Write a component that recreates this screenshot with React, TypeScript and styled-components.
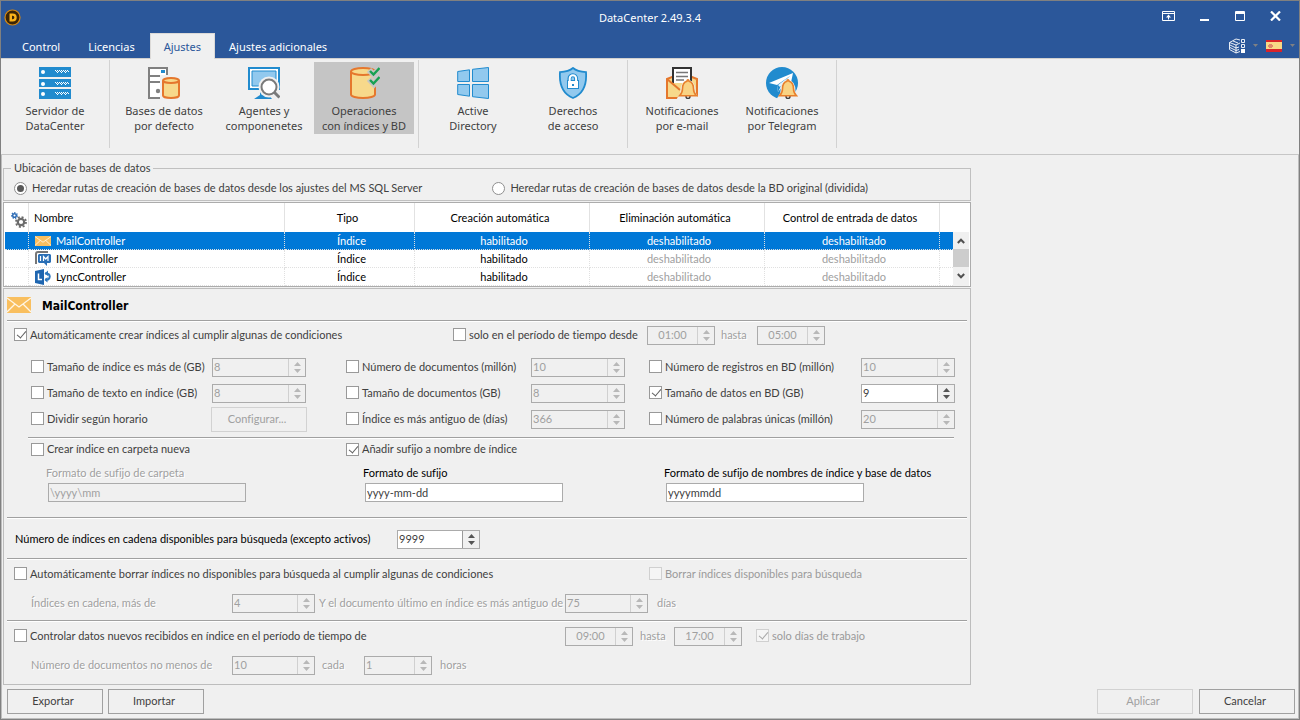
import React, { useState } from 'react';
import styled, { createGlobalStyle, css } from 'styled-components';

const UI = '"Noto Sans", "Open Sans", sans-serif';
const FORM = 'Lato, "Noto Sans", sans-serif';

const Global = createGlobalStyle`
  * { box-sizing: border-box; }
  body { margin: 0; background: #f0f0f0; }
  button, input { font: inherit; margin: 0; }
`;

/* ---------- window frame ---------- */

const Window = styled.div`
  min-height: 100vh;
  display: flex;
  flex-direction: column;
  border: 1px solid #808080;
  background: #f0f0f0;
  color: #404040;
  font: 11px/14px ${FORM};
  font-variant-ligatures: none;
`;

const Header = styled.header`
  background: #2b579a;
  color: #fff;
  font: 11px/15px ${UI};
  border-bottom: 1px solid #d2d0ce;
`;

const TitleBar = styled.div`
  display: grid;
  grid-template-columns: 1fr auto 1fr;
  align-items: center;
  height: 32px;
  padding: 0 3px;
`;

const AppTitle = styled.h1`
  margin: 0;
  font: inherit;
`;

const WindowControls = styled.div`
  display: flex;
  justify-content: flex-end;
  gap: 24px;
  padding: 0 15px 2px 0;
`;

const IconButton = styled.button`
  display: flex;
  align-items: center;
  border: 0;
  padding: 0;
  background: none;
  color: inherit;
`;

const TabBar = styled.nav`
  display: flex;
  justify-content: space-between;
  align-items: center;
  height: 25px;
  padding: 0 4px 0 7px;
`;

const Tabs = styled.div`
  display: flex;
  align-self: stretch;
`;

const Tab = styled.button<{ $active?: boolean }>`
  border: 1px solid transparent;
  border-bottom: 0;
  padding: 1px 13px;
  background: none;
  color: #fff;
  ${p => p.$active && css`
    background: #f0f0f0;
    border-color: #dcdad8;
    color: #2b579a;
    margin: 0 0 -1px 1px;
  `}
`;

const QuickTools = styled.div`
  display: flex;
  align-items: center;
  gap: 8px;
`;

/* ---------- ribbon ---------- */

const Ribbon = styled.div`
  display: flex;
  padding: 1px 0 6px;
  border-bottom: 1px solid #c6c6c6;
  font: 11px/15px ${UI};
`;

const RibbonGroup = styled.div`
  display: flex;
  align-items: flex-start;
  height: 88px;
  padding: 2px 4px 0;
  border-right: 1px solid #d2d2d2;
`;

const RibbonButton = styled.button<{ $selected?: boolean }>`
  display: flex;
  flex-direction: column;
  align-items: center;
  gap: 4px;
  width: 100px;
  height: 72px;
  padding: 5px 0 0;
  border: 0;
  background: ${p => (p.$selected ? '#c5c5c5' : 'none')};
  color: #404040;
  white-space: pre-line;
`;

/* ---------- page ---------- */

const Page = styled.main`
  flex: 1;
  display: flex;
  flex-direction: column;
  padding: 5px 1px 0;
  border: solid #bdbdbd;
  border-width: 0 1px 1px;
`;

const Column = styled.div`
  width: 100%;
  max-width: 968px;
  flex: 1;
  display: flex;
  flex-direction: column;
  gap: 1px;
`;

const LocationBox = styled.fieldset`
  display: flex;
  gap: 67px;
  margin: 0;
  padding: 0 7px;
  border: 1px solid #c0c0c0;
`;

const Legend = styled.legend`
  height: 16px;
  line-height: 16px;
  padding: 0 3px;
`;

const RadioLabel = styled.label`
  display: flex;
  align-items: center;
  gap: 5px;
  height: 24px;
  padding-left: 3px;
`;

const Radio = styled.input.attrs({ type: 'radio' })`
  appearance: none;
  display: grid;
  place-items: center;
  width: 13px;
  height: 13px;
  border: 1px solid #8f8f8f;
  border-radius: 50%;
  background: #fff;
  &:checked::after {
    content: '';
    width: 7px;
    height: 7px;
    border-radius: 50%;
    background: #585858;
  }
`;

/* ---------- controller list ---------- */

const GridBox = styled.div`
  display: flex;
  padding: 0 1px;
  border: 1px solid #acacac;
  background: #fff;
  color: #000;
`;

const DataTable = styled.table`
  flex: 1;
  min-width: 0;
  table-layout: fixed;
  border-collapse: separate;
  border-spacing: 0;
`;

const HeadCell = styled.th<{ $left?: boolean }>`
  height: 29px;
  padding: ${p => (p.$left ? '1px 5px 0' : '1px 4px 0 0')};
  border-right: 1px solid #e2e2e2;
  font-weight: 400;
  text-align: ${p => (p.$left ? 'left' : 'center')};
  &:first-child { padding: 5px 0 0 6px; }
  &:last-child { border-right: 0; }
  > svg { display: block; }
`;

const BodyRow = styled.tr<{ $selected?: boolean }>`
  ${p => p.$selected && css`
    background: #0078d7;
    color: #fff;
  `}
`;

const Cell = styled.td<{ $name?: boolean; $off?: boolean }>`
  height: 18px;
  padding: ${p => (p.$name ? '0 6px' : '0 0 0 4px')};
  border-right: 1px dotted #e0e0e0;
  border-bottom: 1px dotted #e0e0e0;
  text-align: ${p => (p.$name ? 'left' : 'center')};
  ${p => p.$off && css`
    tr:not([aria-selected='true']) > & { color: #a0a0a0; }
  `}
  &:last-child { border-right: 0; }
`;

const NameContent = styled.span`
  display: flex;
  align-items: center;
  gap: 5px;
`;

const ScrollBar = styled.div`
  display: flex;
  flex-direction: column;
  width: 16px;
  margin-top: 29px;
  background: #f0f0f0;
`;

const ScrollArrow = styled.button`
  height: 17px;
  border: 0;
  padding: 0;
  display: grid;
  place-items: center;
  background: none;
`;

const ScrollThumb = styled.div`
  height: 18px;
  background: #cdcdcd;
`;

/* ---------- settings panel ---------- */

const Panel = styled.section`
  padding-bottom: 4px;
  border: 1px solid #bdbdbd;
`;

const PanelHeader = styled.div`
  display: flex;
  align-items: center;
  gap: 11px;
  height: 31px;
  padding-left: 3px;
`;

const PanelTitle = styled.h2`
  margin: 0;
  padding-top: 2px;
  color: #000;
  font: bold 12px/16px "DejaVu Sans Condensed", "DejaVu Sans", sans-serif;
`;

const Divider = styled.hr<{ $inset?: boolean }>`
  height: 2px;
  margin: ${p => (p.$inset ? '5px 16px 0 24px' : '0 3px')};
  border: 0;
  border-top: 1px solid #a0a0a0;
  border-bottom: 1px solid #fff;
`;

const FieldRow = styled.div<{ $cols: string; $height: number; $indent?: boolean }>`
  display: grid;
  grid-template-columns: ${p => p.$cols};
  align-items: center;
  height: ${p => p.$height}px;
  padding-left: ${p => (p.$indent ? 27 : 10)}px;
  white-space: nowrap;
`;

const CountRow = styled(FieldRow)`
  padding-top: 2px;
  padding-left: 11px;
  color: #000;
`;

const PurgeLimits = styled(FieldRow)`
  padding-bottom: 2px;
`;

const ConditionGrid = styled.div`
  display: grid;
  grid-template-columns: 181px 134px 185px 118px 212px 94px;
  grid-auto-rows: 25px;
  row-gap: 1px;
  align-items: center;
  margin-top: 6px;
  padding-left: 27px;
  white-space: nowrap;
`;

const SuffixRow = styled.div`
  display: grid;
  grid-template-columns: 317px 301px 280px;
  padding: 5px 0 15px 42px;
`;

const SuffixField = styled.label<{ $off?: boolean }>`
  display: flex;
  flex-direction: column;
  gap: 3px;
  color: ${p => (p.$off ? '#a0a0a0' : '#000')};
  text-shadow: ${p => (p.$off ? '1px 1px #fff' : 'none')};
`;

const TextBox = styled.input`
  width: 198px;
  height: 19px;
  margin-left: 2px;
  padding: 0 1px;
  border: 1px solid #ababab;
  border-radius: 0;
  background: #fff;
  color: #404040;
  &:disabled { background: #f0f0f0; color: #a0a0a0; }
`;

const CheckLabel = styled.label<{ $off?: boolean }>`
  display: flex;
  align-items: center;
  gap: 3px;
  padding-bottom: 2px;
  color: ${p => (p.$off ? '#9a9a9a' : '#404040')};
`;

const CheckBox = styled.input.attrs({ type: 'checkbox' })`
  appearance: none;
  position: relative;
  width: 13px;
  height: 13px;
  border: 1px solid #999;
  background: #fff;
  &:checked::after {
    content: '';
    position: absolute;
    left: 4px;
    top: 0;
    width: 4px;
    height: 8px;
    border: solid #606060;
    border-width: 0 1px 1px 0;
    transform: rotate(40deg);
  }
  &:disabled { border-color: #d0d0d0; background: #f5f5f5; }
  &:disabled::after { border-color: #a8a8a8; }
`;

const Plain = styled.label`
  padding-bottom: 2px;
`;

const Hint = styled(Plain)`
  color: #a0a0a0;
  text-shadow: 1px 1px #fff;
`;

const SpinFrame = styled.span<{ $width: number; $off?: boolean }>`
  display: flex;
  width: ${p => p.$width}px;
  height: 19px;
  border: 1px solid #ababab;
  color: ${p => (p.$off ? '#b8b8b8' : '#555')};
  background: #f0f0f0;
`;

const SpinInput = styled.input<{ $center?: boolean }>`
  flex: 1;
  min-width: 0;
  padding: 0 1px 1px;
  border: 0;
  border-right: 1px solid #999;
  border-radius: 0;
  background: #fff;
  color: #404040;
  text-align: ${p => (p.$center ? 'center' : 'left')};
  &:disabled { background: #f0f0f0; color: #a0a0a0; border-right-color: #d0d0d0; }
`;

const SpinButtons = styled.span`
  display: flex;
  flex-direction: column;
  justify-content: space-between;
  width: 16px;
  padding: 3px 0;
`;

const SpinButton = styled.button`
  display: flex;
  justify-content: center;
  height: 4px;
  border: 0;
  padding: 0;
  background: none;
  color: inherit;
`;

const PushButton = styled.button`
  width: 96px;
  height: 25px;
  border: 1px solid #a0a0a0;
  padding: 0 4px 2px 0;
  background: #f0f0f0;
  color: #404040;
  &:disabled { border-color: #d2d2d2; color: #a0a0a0; }
`;

const ConfigButton = styled(PushButton)`
  margin-left: -1px;
`;

const Footer = styled.footer`
  display: flex;
  justify-content: space-between;
  padding: 4px 2px 4px 4px;
`;

const ButtonGroup = styled.div<{ $gap: number }>`
  display: flex;
  gap: ${p => p.$gap}px;
`;

/* ---------- icons ---------- */

const Svg = ({ s = 32, children }: { s?: number; children: React.ReactNode }) => (
  <svg width={s} height={s} viewBox={`0 0 ${s} ${s}`} aria-hidden="true">{children}</svg>
);

const LogoIcon = () => (
  <svg width="17" height="17" viewBox="0 0 17 17" aria-hidden="true">
    <circle cx="8.5" cy="8.5" r="7.5" fill="#3b2506" stroke="#d98a0f" strokeWidth="1.2" />
    <path d="M5.5 4.5h3.2a4 4 0 0 1 0 8H5.5zM8 6.700v3.600h.6a1.800 1.800 0 0 0 0-3.600z" fill="#fbb41a" fillRule="evenodd" />
  </svg>
);

const ServersIcon = () => (
  <Svg>
    {[[0, 10], [12, 8], [22, 10]].map(([y, h]) => (
      <g key={y} shapeRendering="crispEdges">
        <rect y={y} width="32" height={h} fill="#218bce" />
        <circle cx="4" cy={y + 5} r="2" fill="#fff" shapeRendering="auto" />
        <path d={`M16 ${y + 3.5}h14`} stroke="#fff" strokeDasharray="1 1" />
        <path d={`M17 ${y + 4.5}h13`} stroke="#fff" strokeDasharray="1 1" />
        <path d={`M18 ${y + 5.5}h10`} stroke="#fff" strokeDasharray="1 3" />
      </g>
    ))}
  </Svg>
);

const Cylinder = ({ x, y, w, h, r }: { x: number; y: number; w: number; h: number; r: number }) => (
  <g fill="#f7d98b" stroke="#e5772d" strokeWidth="2">
    <path d={`M${x} ${y + r}v${h - 2 * r}a${w / 2} ${r} 0 0 0 ${w} 0v${-(h - 2 * r)}`} />
    <ellipse cx={x + w / 2} cy={y + r} rx={w / 2} ry={r} />
  </g>
);

const DatabaseIcon = () => (
  <Svg>
    <path d="M1 1h18v30H1zM1 9h18M1 15h18" fill="#fff" stroke="#808080" strokeWidth="2" />
    <path d="M13 3h4v3h-4z" fill="#218bce" />
    <circle cx="10" cy="24" r="2.200" fill="#808080" />
    <rect x="12" y="8" width="20" height="24" fill="#f0f0f0" />
    <Cylinder x={15} y={11} w={16} h={20} r={2.5} />
  </Svg>
);

const AgentsIcon = () => (
  <Svg>
    <path d="M1 1h30v21H1z" fill="#fff" stroke="#218bce" strokeWidth="2" />
    <path d="M4 4h24v15H4z" fill="#92c9ee" stroke="#218bce" strokeWidth="1" />
    <path d="M12 22h8v5l4 5H6l6-4z" fill="#218bce" />
    <circle cx="21" cy="20" r="10.500" fill="#f0f0f0" />
    <path d="M25 24l7 7" stroke="#f0f0f0" strokeWidth="5" />
    <circle cx="21" cy="20" r="7.500" fill="#fff" stroke="#7a7a7a" strokeWidth="2" />
    <path d="M26 25l5.500 5.500" stroke="#7a7a7a" strokeWidth="3" />
  </Svg>
);

const OperationsIcon = () => (
  <Svg>
    <Cylinder x={3} y={1} w={24} h={30} r={3.5} />
    <path d="M21 3l5 5 6-7M21 12l5 5 6-7" fill="none" stroke="#c5c5c5" strokeWidth="6" />
    <path d="M22 4l3.500 3.500L31.500 1M22 13l3.500 3.500L31.500 10" fill="none" stroke="#17a152" strokeWidth="2.400" />
  </Svg>
);

const DirectoryIcon = () => (
  <Svg>
    <g fill="#92c9ee" stroke="#218bce">
      <path d="M.7 4.500l11.800-1.700v11.700H.7zM15.500 2.300l16-1.800v14h-16zM.7 17.500h11.800v11.700L.7 27.500zM15.500 17.500h16v14l-16-1.800z" />
    </g>
  </Svg>
);

const ShieldIcon = () => (
  <Svg>
    <path d="M16 1c3 2.500 8 3.800 13 4.200C29.800 16 27 26.500 16 31 5 26.500 2.200 16 3 5.200 8 4.800 13 3.500 16 1z" fill="#92c9ee" stroke="#218bce" strokeWidth="1.800" />
    <path d="M12.500 14v-2.500a3.300 3.300 0 0 1 6.600 0V14" fill="none" stroke="#218bce" strokeWidth="4" />
    <rect x="10.500" y="13.500" width="11" height="8" fill="#fff" stroke="#218bce" />
    <path d="M12.700 14v-2.500a3.200 3.200 0 0 1 6.400 0V14" fill="none" stroke="#fff" strokeWidth="2" />
    <path d="M15 17h2v2h-2z" fill="#218bce" />
  </Svg>
);

const Bell = ({ halo }: { halo: string }) => (
  <g>
    <path d="M13 31c1-2 3-3 3-7 0-6 2-9 6-10 4 1 6 4 6 10 0 4 2 5 3 7z" stroke={halo} strokeWidth="3" fill={halo} />
    <circle cx="22" cy="29.500" r="2" fill="none" stroke="#404040" strokeWidth="1.500" />
    <path d="M13.500 28.700c2-2 3-3.500 3-7 0-4.200 1.700-6.700 4.500-7.500.2-2 1.800-2 2 0 2.800.8 4.500 3.300 4.500 7.500 0 3.500 1 5 3 7z" fill="#f9d384" stroke="#e8802c" strokeWidth="1.600" />
  </g>
);

const MailNoticeIcon = () => (
  <Svg>
    <path d="M1 12l5-2h20l5 2v19H1z" fill="#f7d98b" stroke="#e5772d" strokeWidth="2" />
    <path d="M7 16V1h18v15" fill="#fff" stroke="#333" strokeWidth="2" />
    <path d="M10 5.500h12M10 9.500h12M10 13h8" stroke="#777" strokeWidth="1.500" />
    <path d="M1 12l13 11" stroke="#e5772d" strokeWidth="2" />
    <Bell halo="#f0f0f0" />
  </Svg>
);

const TelegramIcon = () => (
  <Svg>
    <circle cx="16" cy="16" r="16" fill="#218bce" />
    <path d="M3 16L27 6l-4 19-7-5-4 5-1-7z" fill="#fff" />
    <path d="M11 18l13-9-9 10-3 6z" fill="#218bce" />
    <path d="M12 18l12-9-10 11z" fill="#e5f3fb" />
    <Bell halo="#f0f0f0" />
  </Svg>
);

const RibbonToggleIcon = () => (
  <svg width="13" height="10" viewBox="0 0 13 10" aria-hidden="true">
    <path d="M.5.5h12v9H.5zM1 2.500h11M6.500 8.500v-4" fill="none" stroke="#fff" />
    <path d="M4 6.500h5L6.500 3.500z" fill="#fff" />
  </svg>
);

const CubeIcon = () => (
  <Svg s={16}>
    <g fill="none" stroke="#fff">
      <path d="M.5 4.500L7 1l4 1M.5 4.500L7 7l4-2M.5 4.500v7L7 15l4-1.500M7 7v8M1 7l6 3 3-1M1 9.500L7 12.500l3-1M4 3l5 2" strokeWidth=".9" />
      <path d="M12.500 1.500h3v3h-3zM12.500 6.500h3v3h-3z" strokeWidth=".9" />
    </g>
    <path d="M12 11h4v4h-4z" fill="#fff" />
  </Svg>
);

const FlagIcon = () => (
  <svg width="16" height="12" viewBox="0 0 16 12" aria-hidden="true">
    <path d="M0 0h16v12H0z" fill="#d8232a" />
    <path d="M0 2h16v7H0z" fill="#f8d886" />
    <path d="M3 4h3v4H3zM2 5h5v2H2z" fill="#e0876a" />
  </svg>
);

const DropArrow = () => (
  <svg width="5" height="3" viewBox="0 0 5 3" aria-hidden="true"><path d="M0 0h5L2.500 3z" fill="#7f8084" /></svg>
);

const EnvelopeIcon = ({ w, h }: { w: number; h: number }) => (
  <svg width={w} height={h} viewBox="0 0 24 16" preserveAspectRatio="none" aria-hidden="true">
    <path d="M0 0h24v16H0z" fill="#f9bf5f" />
    <path d="M0 1l12 9L24 1M0 15l8-8M24 15l-8-8" fill="none" stroke="#fff6e6" strokeWidth="1.300" />
  </svg>
);

const ImIcon = () => (
  <Svg s={16}>
    <path d="M1 13V3a2 2 0 0 1 2-2h10" fill="none" stroke="#777" strokeWidth="2" />
    <path d="M4 3h11l1 1v7l-1 1h-3v3l-3-3H4L3 11V4z" fill="#2a6fb6" />
    <path d="M5.500 5v5M8.500 10V5.500l2.250 2.500L13 5.500V10" fill="none" stroke="#fff" strokeWidth="1.200" />
  </Svg>
);

const LyncIcon = () => (
  <Svg s={16}>
    <path d="M0 2l9-2v16l-9-2z" fill="#1f66b0" />
    <path d="M3.500 4.500v6H7" fill="none" stroke="#fff" strokeWidth="1.500" />
    <path d="M10 4.500h2a3.200 3.200 0 0 1 1 6h-3" fill="none" stroke="#2f78bd" strokeWidth="2" />
    <path d="M13 1.500L9.500 4.500 13 7zM12.500 8v5.500L9.500 11z" fill="#2f78bd" />
  </Svg>
);

const GearsIcon = () => (
  <Svg s={16}>
    <circle cx="3.500" cy="3.500" r="1.800" fill="none" stroke="#2f6db5" strokeWidth="1.500" />
    <circle cx="3.500" cy="3.500" r="2.900" fill="none" stroke="#2f6db5" strokeWidth="1.200" strokeDasharray="1.300 1.303" />
    <circle cx="10" cy="10" r="3.200" fill="none" stroke="#6b6b6b" strokeWidth="2.200" />
    <circle cx="10" cy="10" r="5" fill="none" stroke="#6b6b6b" strokeWidth="1.800" strokeDasharray="2 1.927" />
  </Svg>
);

const Chevron = ({ down }: { down?: boolean }) => (
  <svg width="8" height="6" viewBox="0 0 8 6" aria-hidden="true">
    <path d={down ? 'M.8 1L4 4.300 7.200 1' : 'M.8 5L4 1.700 7.200 5'} fill="none" stroke="#505050" strokeWidth="2" />
  </svg>
);

const Triangle = ({ down }: { down?: boolean }) => (
  <svg width="7" height="4" viewBox="0 0 7 4" aria-hidden="true">
    <path d={down ? 'M0 0h7L3.500 4z' : 'M0 4h7L3.500 0z'} fill="currentColor" />
  </svg>
);

/* ---------- controls ---------- */

interface SpinProps { id?: string; label?: string; value: string; width: number; off?: boolean; center?: boolean }

const Spin = ({ id, label, value, width, off, center }: SpinProps) => (
  <SpinFrame $width={width} $off={off}>
    <SpinInput id={id} aria-label={label} defaultValue={value} disabled={off} $center={center} />
    <SpinButtons>
      <SpinButton aria-label="Aumentar" disabled={off}><Triangle /></SpinButton>
      <SpinButton aria-label="Disminuir" disabled={off}><Triangle down /></SpinButton>
    </SpinButtons>
  </SpinFrame>
);

const Check = ({ text, on, off }: { text: string; on?: boolean; off?: boolean }) => (
  <CheckLabel $off={off}>
    <CheckBox defaultChecked={on} disabled={off} />
    {text}
  </CheckLabel>
);

/* ---------- data ---------- */

const RIBBON = [
  [{ text: 'Servidor de\nDataCenter', icon: <ServersIcon /> }],
  [
    { text: 'Bases de datos\npor defecto', icon: <DatabaseIcon /> },
    { text: 'Agentes y\ncomponenetes', icon: <AgentsIcon /> },
    { text: 'Operaciones\ncon índices y BD', icon: <OperationsIcon />, selected: true },
  ],
  [
    { text: 'Active\nDirectory', icon: <DirectoryIcon /> },
    { text: 'Derechos\nde acceso', icon: <ShieldIcon /> },
  ],
  [
    { text: 'Notificaciones\npor e-mail', icon: <MailNoticeIcon /> },
    { text: 'Notificaciones\npor Telegram', icon: <TelegramIcon /> },
  ],
];

const CONTROLLERS = [
  { name: 'MailController', icon: <EnvelopeIcon w={16} h={10} /> },
  { name: 'IMController', icon: <ImIcon /> },
  { name: 'LyncController', icon: <LyncIcon /> },
];

const CONDITIONS = [
  { text: 'Tamaño de índice es más de (GB)', value: '8' },
  { text: 'Número de documentos (millón)', value: '10' },
  { text: 'Número de registros en BD (millón)', value: '10' },
  { text: 'Tamaño de texto en índice (GB)', value: '8' },
  { text: 'Tamaño de documentos (GB)', value: '8' },
  { text: 'Tamaño de datos en BD (GB)', value: '9', on: true },
  { text: 'Dividir según horario' },
  { text: 'Índice es más antiguo de (días)', value: '366' },
  { text: 'Número de palabras únicas (millón)', value: '20' },
];

export default function App() {
  const [selected, setSelected] = useState(0);
  return (
    <>
      <Global />
      <Window>
        <Header>
          <TitleBar>
            <LogoIcon />
            <AppTitle>DataCenter 2.49.3.4</AppTitle>
            <WindowControls>
              <IconButton aria-label="Contraer cinta"><RibbonToggleIcon /></IconButton>
              <IconButton aria-label="Minimizar">
                <svg width="11" height="10"><path d="M1 8h9v2H1z" fill="#fff" /></svg>
              </IconButton>
              <IconButton aria-label="Maximizar">
                <svg width="12" height="10"><path d="M1.500 .5h9v9h-9zM1 1.500h10M1 2.500h10" fill="none" stroke="#fff" /></svg>
              </IconButton>
              <IconButton aria-label="Cerrar">
                <svg width="11" height="10"><path d="M1 .5l9 9M10 .5l-9 9" stroke="#fff" strokeWidth="2.200" /></svg>
              </IconButton>
            </WindowControls>
          </TitleBar>
          <TabBar>
            <Tabs>
              <Tab>Control</Tab>
              <Tab>Licencias</Tab>
              <Tab $active>Ajustes</Tab>
              <Tab>Ajustes adicionales</Tab>
            </Tabs>
            <QuickTools>
              <IconButton aria-label="Apariencia"><CubeIcon /></IconButton>
              <IconButton aria-label="Opciones de apariencia"><DropArrow /></IconButton>
              <IconButton aria-label="Idioma"><FlagIcon /></IconButton>
              <IconButton aria-label="Opciones de idioma"><DropArrow /></IconButton>
            </QuickTools>
          </TabBar>
        </Header>

        <Ribbon>
          {RIBBON.map((group, i) => (
            <RibbonGroup key={i}>
              {group.map(item => (
                <RibbonButton key={item.text} $selected={'selected' in item}>
                  {item.icon}
                  {item.text}
                </RibbonButton>
              ))}
            </RibbonGroup>
          ))}
        </Ribbon>

        <Page>
          <Column>
            <LocationBox>
              <Legend>Ubicación de bases de datos</Legend>
              <RadioLabel>
                <Radio name="path" defaultChecked />
                Heredar rutas de creación de bases de datos desde los ajustes del MS SQL Server
              </RadioLabel>
              <RadioLabel>
                <Radio name="path" />
                Heredar rutas de creación de bases de datos desde la BD original (dividida)
              </RadioLabel>
            </LocationBox>

            <GridBox>
              <DataTable>
                <colgroup>
                  <col width="24" /><col width="256" /><col width="130" />
                  <col width="175" /><col width="175" /><col width="175" /><col />
                </colgroup>
                <thead>
                  <tr>
                    <HeadCell aria-label="Ajustes"><GearsIcon /></HeadCell>
                    <HeadCell $left>Nombre</HeadCell>
                    <HeadCell>Tipo</HeadCell>
                    <HeadCell>Creación automática</HeadCell>
                    <HeadCell>Eliminación automática</HeadCell>
                    <HeadCell>Control de entrada de datos</HeadCell>
                    <HeadCell aria-hidden="true" />
                  </tr>
                </thead>
                <tbody>
                  {CONTROLLERS.map((c, i) => (
                    <BodyRow key={c.name} $selected={i === selected} aria-selected={i === selected} onClick={() => setSelected(i)}>
                      <Cell />
                      <Cell $name><NameContent>{c.icon}{c.name}</NameContent></Cell>
                      <Cell>Índice</Cell>
                      <Cell>habilitado</Cell>
                      <Cell $off>deshabilitado</Cell>
                      <Cell $off>deshabilitado</Cell>
                      <Cell />
                    </BodyRow>
                  ))}
                </tbody>
              </DataTable>
              <ScrollBar>
                <ScrollArrow aria-label="Subir"><Chevron /></ScrollArrow>
                <ScrollThumb />
                <ScrollArrow aria-label="Bajar"><Chevron down /></ScrollArrow>
              </ScrollBar>
            </GridBox>

            <Panel>
              <PanelHeader>
                <EnvelopeIcon w={24} h={16} />
                <PanelTitle>MailController</PanelTitle>
              </PanelHeader>
              <Divider />
              <FieldRow $height={27} $cols="439px 194px 74px 36px 68px">
                <Check text="Automáticamente crear índices al cumplir algunas de condiciones" on />
                <Check text="solo en el período de tiempo desde" />
                <Spin label="Desde" value="01:00" width={68} off center />
                <Hint htmlFor="until">hasta</Hint>
                <Spin id="until" value="05:00" width={68} off center />
              </FieldRow>
              <ConditionGrid>
                {CONDITIONS.map(c => (
                  <React.Fragment key={c.text}>
                    <Check text={c.text} on={c.on} />
                    {c.value
                      ? <Spin label={c.text} value={c.value} width={94} off={!c.on} />
                      : <ConfigButton disabled>Configurar...</ConfigButton>}
                  </React.Fragment>
                ))}
              </ConditionGrid>
              <Divider $inset />
              <FieldRow $height={22} $indent $cols="315px 1fr">
                <Check text="Crear índice en carpeta nueva" />
                <Check text="Añadir sufijo a nombre de índice" on />
              </FieldRow>
              <SuffixRow>
                <SuffixField $off>
                  Formato de sufijo de carpeta
                  <TextBox defaultValue="\yyyy\mm" disabled />
                </SuffixField>
                <SuffixField>
                  Formato de sufijo
                  <TextBox defaultValue="yyyy-mm-dd" />
                </SuffixField>
                <SuffixField>
                  Formato de sufijo de nombres de índice y base de datos
                  <TextBox defaultValue="yyyymmdd" />
                </SuffixField>
              </SuffixRow>
              <Divider />
              <CountRow $height={39} $cols="382px 83px">
                <Plain htmlFor="chain">Número de índices en cadena disponibles para búsqueda (excepto activos)</Plain>
                <Spin id="chain" value="9999" width={83} />
              </CountRow>
              <Divider />
              <FieldRow $height={29} $cols="635px 1fr">
                <Check text="Automáticamente borrar índices no disponibles para búsqueda al cumplir algunas de condiciones" />
                <Check text="Borrar índices disponibles para búsqueda" off />
              </FieldRow>
              <PurgeLimits $height={31} $indent $cols="201px 87px 246px 92px 60px">
                <Hint htmlFor="more">Índices en cadena, más de</Hint>
                <Spin id="more" value="4" width={83} off />
                <Hint htmlFor="older">Y el documento último en índice es más antiguo de</Hint>
                <Spin id="older" value="75" width={83} off />
                <Hint as="span">días</Hint>
              </PurgeLimits>
              <Divider />
              <FieldRow $height={29} $cols="551px 75px 34px 82px 1fr">
                <Check text="Controlar datos nuevos recibidos en índice en el período de tiempo de" />
                <Spin label="Inicio" value="09:00" width={68} off center />
                <Hint htmlFor="end">hasta</Hint>
                <Spin id="end" value="17:00" width={68} off center />
                <Check text="solo días de trabajo" on off />
              </FieldRow>
              <FieldRow $height={29} $indent $cols="201px 90px 42px 76px 60px">
                <Hint htmlFor="docs">Número de documentos no menos de</Hint>
                <Spin id="docs" value="10" width={83} off />
                <Hint htmlFor="every">cada</Hint>
                <Spin id="every" value="1" width={68} off />
                <Hint as="span">horas</Hint>
              </FieldRow>
            </Panel>
          </Column>

          <Footer>
            <ButtonGroup $gap={5}>
              <PushButton>Exportar</PushButton>
              <PushButton>Importar</PushButton>
            </ButtonGroup>
            <ButtonGroup $gap={6}>
              <PushButton disabled>Aplicar</PushButton>
              <PushButton>Cancelar</PushButton>
            </ButtonGroup>
          </Footer>
        </Page>
      </Window>
    </>
  );
}
